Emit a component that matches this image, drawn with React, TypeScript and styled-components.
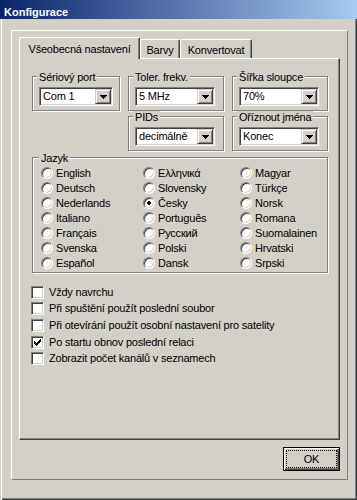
import React from 'react';
import styled, { createGlobalStyle } from 'styled-components';

const Global = createGlobalStyle`
  html, body { margin: 0; padding: 0; background: #d4d0c8; }
  body {
    font-family: "Liberation Sans", Arial, sans-serif;
    font-size: 11px;
    letter-spacing: -0.2px;
    color: #000;
  }
  * { box-sizing: border-box; }
`;

const Window = styled.div`
  width: 357px;
  height: 500px;
  display: flex;
  flex-direction: column;
  background: #d4d0c8;
  overflow: hidden;
`;

const TitleBar = styled.div`
  height: 19px;
  padding: 5px 0 0 4px;
  line-height: 14px;
  font-weight: bold;
  letter-spacing: 0;
  color: #fff;
  background: linear-gradient(to right, #0a246a, #a6caf0);
`;

const Client = styled.div`
  flex: 1;
  padding: 11px 9px 20px 11px;
  box-shadow: inset 1px 0 0 #d4d0c8, inset 2px 0 0 #fff, inset -1px -1px 0 #404040,
    inset -2px -2px 0 #808080;
`;

const Frame = styled.div`
  display: flex;
  flex-direction: column;
  border: 1px solid;
  border-color: #fff #808080 #808080 #fff;
  padding: 6px 7px 8px 7px;
`;

const TabRow = styled.div`
  display: flex;
  align-items: flex-end;
  height: 21px;
`;

const Tab = styled.div<{ $active?: boolean; $w: number }>`
  width: ${p => p.$w}px;
  height: ${p => (p.$active ? 22 : 19)}px;
  margin-bottom: ${p => (p.$active ? -1 : 0)}px;
  position: relative;
  z-index: ${p => (p.$active ? 1 : 0)};
  background: #d4d0c8;
  border-top: 1px solid #fff;
  border-left: 1px solid #fff;
  border-right: 1px solid #404040;
  border-radius: 2px 2px 0 0;
  box-shadow: inset -1px 0 0 #808080;
  padding-top: ${p => (p.$active ? 5 : 4)}px;
  line-height: 13px;
  text-align: center;
  white-space: nowrap;
`;

const Panel = styled.div`
  height: 382px;
  border: 1px solid;
  border-color: #fff #404040 #404040 #fff;
  box-shadow: inset -1px -1px 0 #808080;
  padding: 17px 11px 0 12px;
`;

const GroupGrid = styled.div`
  display: grid;
  grid-template-columns: 88px 96px 96px;
  column-gap: 8px;
  row-gap: 5px;
`;

const GroupBox = styled.div<{ $col?: number; $row?: number }>`
  border: 1px solid #808080;
  box-shadow: inset 1px 1px 0 #fff, 1px 1px 0 #fff;
  padding: 0 0 4px 6px;
  ${p => (p.$col ? `grid-column: ${p.$col};` : '')}
  ${p => (p.$row ? `grid-row: ${p.$row};` : '')}
`;

const LangBox = styled(GroupBox)`
  margin-top: 6px;
  padding: 0 0 1px 8px;
`;

const GroupLabel = styled.div`
  width: fit-content;
  margin: -6px 0 0 -2px;
  padding: 0 2px;
  height: 13px;
  line-height: 13px;
  background: #d4d0c8;
  white-space: nowrap;
`;

const Combo = styled.div<{ $w: number }>`
  width: ${p => p.$w}px;
  height: 19px;
  margin-top: 3px;
  display: flex;
  border: 1px solid;
  border-color: #808080 #fff #fff #808080;
  box-shadow: inset 1px 1px 0 #404040, inset -1px -1px 0 #d4d0c8;
  padding: 1px;
  background: #fff;
`;

const ComboText = styled.div`
  flex: 1;
  padding-left: 2px;
  line-height: 15px;
  white-space: nowrap;
  overflow: hidden;
`;

const DropButton = styled.div`
  width: 16px;
  height: 15px;
  display: flex;
  align-items: center;
  justify-content: center;
  background: #d4d0c8;
  border: 1px solid;
  border-color: #d4d0c8 #404040 #404040 #d4d0c8;
  box-shadow: inset 1px 1px 0 #fff, inset -1px -1px 0 #808080;
`;

const RadioGrid = styled.div`
  margin-top: 1px;
  display: grid;
  grid-template-columns: 102px 97px 1fr;
  grid-auto-flow: column;
  grid-template-rows: repeat(7, 15px);
`;

const RadioRow = styled.div`
  display: flex;
  align-items: flex-start;
  gap: 3px;
  height: 15px;
  line-height: 15px;
  white-space: nowrap;
`;

const RadioCircle = styled.span`
  margin-top: 1px;
  width: 12px;
  height: 12px;
  flex: none;
  border-radius: 50%;
  border: 1px solid;
  border-color: #808080 #fff #fff #808080;
  box-shadow: inset 1px 1px 0 #404040, inset -1px -1px 0 #d4d0c8;
  background: #fff;
  display: flex;
  align-items: center;
  justify-content: center;
`;

const CheckList = styled.div`
  margin: 11px 0 0 -1px;
  display: flex;
  flex-direction: column;
`;

const CheckRow = styled.div`
  height: 16.67px;
  display: flex;
  align-items: center;
  gap: 5px;
  line-height: 13px;
  white-space: nowrap;
`;

const CheckBox = styled.span`
  width: 13px;
  height: 13px;
  flex: none;
  border: 1px solid;
  border-color: #808080 #fff #fff #808080;
  box-shadow: inset 1px 1px 0 #404040, inset -1px -1px 0 #d4d0c8;
  background: #fff;
  display: flex;
  align-items: center;
  justify-content: center;
`;

const ButtonRow = styled.div`
  display: flex;
  justify-content: flex-end;
  margin-top: 7px;
`;

const Button = styled.div`
  width: 57px;
  height: 24px;
  border: 1px solid #000;
  box-shadow: inset 1px 1px 0 #fff, inset -1px -1px 0 #404040, inset -2px -2px 0 #808080;
  padding: 2px;
  display: flex;
`;

const FocusRing = styled.div`
  flex: 1;
  border: 1px dotted #000;
  display: flex;
  align-items: center;
  justify-content: center;
  line-height: 13px;
`;

const Arrow = () => (
  <svg width="7" height="4" viewBox="0 0 7 4" shapeRendering="crispEdges">
    <path d="M0 0h7v1h-1v1h-1v1h-1v1h-1v-1h-1v-1h-1v-1h-1z" fill="#000" />
  </svg>
);

const Dot = () => (
  <svg width="4" height="4" viewBox="0 0 4 4" shapeRendering="crispEdges">
    <path d="M1 0h2v1h1v2h-1v1h-2v-1h-1v-2h1z" fill="#000" />
  </svg>
);

const Check = () => (
  <svg width="7" height="7" viewBox="0 0 7 7" shapeRendering="crispEdges">
    <path
      d="M6 0h1v1h-1z M5 1h2v1h-2z M0 2h1v1h-1z M4 2h3v1h-3z M0 3h2v1h-2z M3 3h3v1h-3z M0 4h5v1h-5z M1 5h3v1h-3z M2 6h1v1h-1z"
      fill="#000"
    />
  </svg>
);

const ComboBox = ({ value, width }: { value: string; width: number }) => (
  <Combo $w={width}>
    <ComboText>{value}</ComboText>
    <DropButton>
      <Arrow />
    </DropButton>
  </Combo>
);

const languages = [
  'English', 'Deutsch', 'Nederlands', 'Italiano', 'Français', 'Svenska', 'Español',
  'Ελληνικά', 'Slovensky', 'Česky', 'Português', 'Русский', 'Polski', 'Dansk',
  'Magyar', 'Türkçe', 'Norsk', 'Romana', 'Suomalainen', 'Hrvatski', 'Srpski',
];

const options = [
  { label: 'Vždy navrchu', checked: false },
  { label: 'Při spuštění použít poslední soubor', checked: false },
  { label: 'Při otevírání použít osobní nastavení pro satelity', checked: false },
  { label: 'Po startu obnov poslední relaci', checked: true },
  { label: 'Zobrazit počet kanálů v seznamech', checked: false },
];

export default function App() {
  return (
    <>
      <Global />
      <Window>
        <TitleBar>Konfigurace</TitleBar>
        <Client>
          <Frame>
            <TabRow>
              <Tab $active $w={121}>Všeobecná nastavení</Tab>
              <Tab $w={40}>Barvy</Tab>
              <Tab $w={72}>Konvertovat</Tab>
            </TabRow>
            <Panel>
              <GroupGrid>
                <GroupBox>
                  <GroupLabel>Sériový port</GroupLabel>
                  <ComboBox value="Com 1" width={74} />
                </GroupBox>
                <GroupBox>
                  <GroupLabel>Toler. frekv.</GroupLabel>
                  <ComboBox value="5 MHz" width={80} />
                </GroupBox>
                <GroupBox>
                  <GroupLabel>Šířka sloupce</GroupLabel>
                  <ComboBox value="70%" width={80} />
                </GroupBox>
                <GroupBox $col={2} $row={2}>
                  <GroupLabel>PIDs</GroupLabel>
                  <ComboBox value="decimálně" width={80} />
                </GroupBox>
                <GroupBox $col={3} $row={2}>
                  <GroupLabel>Oříznout jména</GroupLabel>
                  <ComboBox value="Konec" width={80} />
                </GroupBox>
              </GroupGrid>
              <LangBox>
                <GroupLabel>Jazyk</GroupLabel>
                <RadioGrid>
                  {languages.map(l => (
                    <RadioRow key={l}>
                      <RadioCircle>{l === 'Česky' && <Dot />}</RadioCircle>
                      <span>{l}</span>
                    </RadioRow>
                  ))}
                </RadioGrid>
              </LangBox>
              <CheckList>
                {options.map(o => (
                  <CheckRow key={o.label}>
                    <CheckBox>{o.checked && <Check />}</CheckBox>
                    <span>{o.label}</span>
                  </CheckRow>
                ))}
              </CheckList>
            </Panel>
            <ButtonRow>
              <Button>
                <FocusRing>OK</FocusRing>
              </Button>
            </ButtonRow>
          </Frame>
        </Client>
      </Window>
    </>
  );
}
